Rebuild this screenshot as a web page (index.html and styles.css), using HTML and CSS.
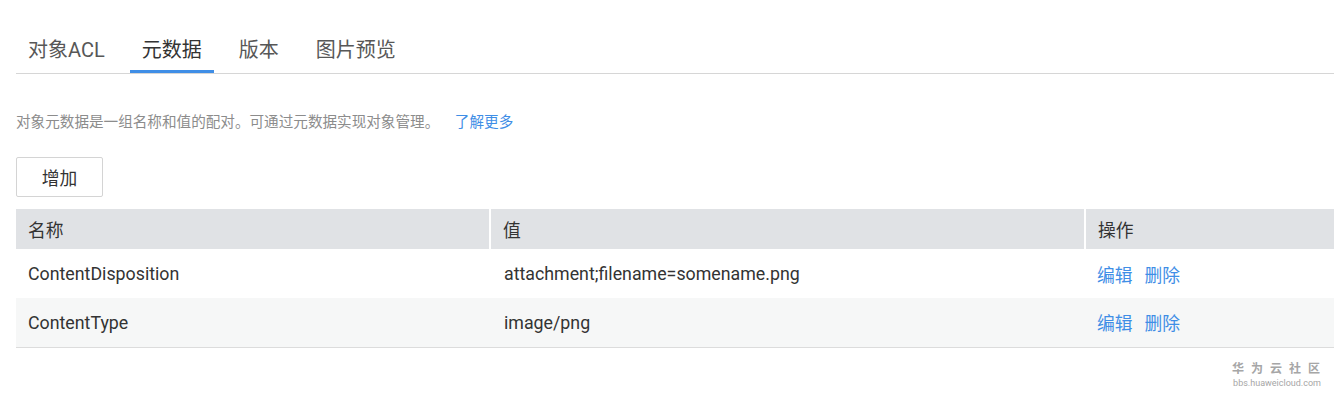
FILE: index.html
```html
<!DOCTYPE html>
<html>
<head lang="zh-CN">
    <meta charset="UTF-8">
    <title>元数据</title>
    <link rel="stylesheet" href="styles.css">
</head>
<body>
<div id="page">
    <ul id="tabs">
        <li>对象ACL</li>
        <li class="selected">元数据</li>
        <li>版本</li>
        <li>图片预览</li>
    </ul>
    <p class="desc">对象元数据是一组名称和值的配对。可通过元数据实现对象管理。 <a href="#">了解更多</a></p>
    <button class="btn">增加</button>
    <table class="meta">
        <thead>
        <tr>
            <th class="c-name">名称</th>
            <th class="c-value">值</th>
            <th class="c-op">操作</th>
        </tr>
        </thead>
        <tbody>
        <tr>
            <td>ContentDisposition</td>
            <td>attachment;filename=somename.png</td>
            <td class="op"><a href="#">编辑</a><a href="#">删除</a></td>
        </tr>
        <tr class="odd">
            <td>ContentType</td>
            <td>image/png</td>
            <td class="op"><a href="#">编辑</a><a href="#">删除</a></td>
        </tr>
        </tbody>
    </table>
</div>
<div class="mark">
    <div class="mark-cn">华 为 云 社 区</div>
    <div class="mark-en">bbs.huaweicloud.com</div>
</div>
</body>
</html>
```

FILE: styles.css
```css
*{
    padding: 0;
    margin: 0;
    box-sizing: border-box;
}
body{
    font-family: Roboto, "Noto Sans CJK SC", sans-serif;
    color: #333;
    background: #fff;
}
ul{
    list-style: none;
}
a{
    color: #3f8ee6;
    text-decoration: none;
}
#page{
    padding-left: 16px;
}
#tabs{
    display: flex;
    margin-top: 35px;
    border-bottom: 1px solid #d6d6d6;
}
#tabs li{
    padding: 0 12px 5px;
    margin-right: 13px;
    font-size: 20px;
    line-height: 30px;
    color: #575757;
    border-bottom: 3px solid transparent;
    cursor: pointer;
}
#tabs li.selected{
    color: #333;
    border-bottom-color: #3f8ee6;
}
.desc{
    margin-top: 38px;
    font-size: 14.6px;
    line-height: 20px;
    color: #8c8c8c;
}
.desc a{
    margin-left: 12px;
}
.btn{
    display: block;
    margin-top: 25px;
    width: 87px;
    height: 40px;
    font-family: inherit;
    font-size: 17.8px;
    color: #333;
    background: #fff;
    border: 1px solid #d4d4d4;
    border-radius: 2px;
}
.meta{
    margin-top: 12px;
    width: 100%;
    border-collapse: collapse;
    font-size: 17.8px;
}
.meta th{
    height: 40px;
    padding-left: 12px;
    text-align: left;
    font-weight: normal;
    background: #e0e2e5;
    border-left: 2px solid #fff;
}
.meta th.c-name{
    width: 474px;
    border-left: none;
}
.meta th.c-value{
    width: 595px;
}
.meta td{
    height: 49px;
    padding-left: 12px;
}
.meta td + td{
    padding-left: 14px;
}
.meta td.op{
    padding-left: 12px;
}
.meta tr.odd td{
    background: #f6f7f7;
    border-bottom: 1px solid #dcdcdc;
}
.meta td a{
    margin-right: 12px;
}
.mark{
    position: absolute;
    right: 12px;
    top: 361px;
    text-align: center;
    color: #a6a6a6;
}
.mark-cn{
    font-size: 12px;
    font-weight: bold;
    line-height: 16px;
    letter-spacing: 2px;
}
.mark-en{
    font-size: 9px;
    line-height: 12px;
}
```
